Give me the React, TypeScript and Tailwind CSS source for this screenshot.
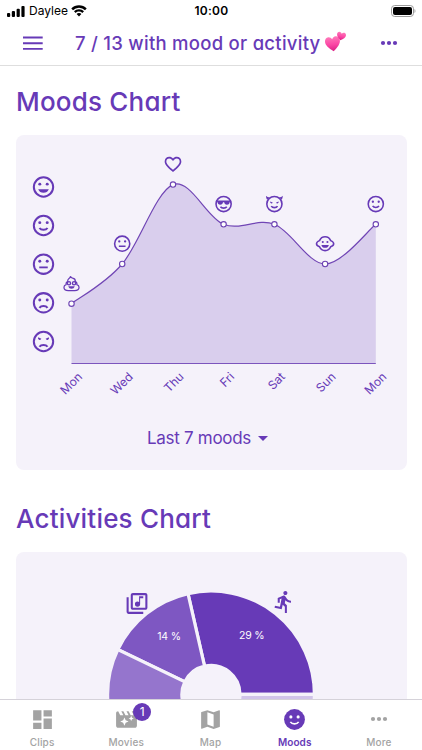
import type { ReactNode } from 'react';
import { MdDirectionsRun, MdFavoriteBorder, MdMap, MdOutlineLibraryMusic } from 'react-icons/md';

const heading = 'font-[Inter,sans-serif] font-medium [font-feature-settings:"cv11"]';

type Face = 'grin' | 'smile' | 'neutral' | 'sad' | 'angry' | 'cool' | 'devil' | 'monkey' | 'poop' | 'heart';

const axis: { face: Face; y: number }[] = [
    { face: 'grin', y: 187 },
    { face: 'smile', y: 225.5 },
    { face: 'neutral', y: 264.2 },
    { face: 'sad', y: 302.8 },
    { face: 'angry', y: 341.5 },
];

const moods: { day: string; x: number; y: number; face: Face }[] = [
    { day: 'Mon', x: 71.5, y: 303.7, face: 'poop' },
    { day: 'Wed', x: 122.2, y: 264, face: 'neutral' },
    { day: 'Thu', x: 173, y: 184.6, face: 'heart' },
    { day: 'Fri', x: 223.6, y: 224.3, face: 'cool' },
    { day: 'Sat', x: 274.4, y: 224.3, face: 'devil' },
    { day: 'Sun', x: 325.1, y: 264, face: 'monkey' },
    { day: 'Mon', x: 375.8, y: 224.3, face: 'smile' },
];

// Catmull-Rom spline through all the points
function curve() {
    let d = `M${moods[0].x},${moods[0].y}`;
    for (let i = 0; i < moods.length - 1; i++) {
        const a = moods[Math.max(i - 1, 0)];
        const b = moods[i];
        const c = moods[i + 1];
        const e = moods[Math.min(i + 2, moods.length - 1)];
        d += `C${b.x + (c.x - a.x) / 6},${b.y + (c.y - a.y) / 6} ${c.x - (e.x - b.x) / 6},${c.y - (e.y - b.y) / 6} ${c.x},${c.y}`;
    }
    return d;
}

function Eyes({ r = 1.4 }: { r?: number }) {
    return (
        <g fill="currentColor" stroke="none">
            <circle cx="8.5" cy="9.3" r={r} />
            <circle cx="15.5" cy="9.3" r={r} />
        </g>
    );
}

function FaceIcon({ face, cx, cy, size }: { face: Face; cx: number; cy: number; size: number }) {
    const x = cx - size / 2;
    const y = cy - size / 2;
    if (face === 'heart') return <MdFavoriteBorder x={x} y={y} size={size} />;
    const round = face !== 'poop' && face !== 'monkey';
    return (
        <svg x={x} y={y} width={size} height={size} viewBox="0 0 24 24" fill="none" stroke="currentColor" strokeWidth="1.9" overflow="visible">
            {round && <circle cx="12" cy="12" r="9.1" />}
            {['grin', 'smile', 'neutral', 'sad'].includes(face) && <Eyes />}
            {face === 'grin' && <path d="M7 14h10c-.8 2.2-2.7 3.4-5 3.4S7.8 16.2 7 14z" fill="currentColor" stroke="none" />}
            {face === 'smile' && <path d="M8.2 14.3c.8 1.2 2.2 1.8 3.8 1.8s3-.6 3.8-1.8" />}
            {face === 'neutral' && <path d="M8 15h8" strokeWidth="1.7" />}
            {face === 'sad' && <path d="M8.2 16.8c.8-1.2 2.2-1.8 3.8-1.8s3 .6 3.8 1.8" />}
            {face === 'angry' && (
                <>
                    <path d="M8.2 17c.8-1.2 2.2-1.8 3.8-1.8s3 .6 3.8 1.8" />
                    <path d="M7 8 10 9.5A1.5 1.5 0 1 1 7 8zM17 8 14 9.500A1.500 1.500 0 1 0 17 8z" fill="currentColor" stroke="none" />
                </>
            )}
            {face === 'cool' && (
                <>
                    <path d="M3.3 7.800h17.4v1.500h-1.300c-.2 2.400-1.200 3.500-3.400 3.500-2 0-3-1-3.300-2.900h-1.400C11 11.800 10 12.800 8 12.800s-3.200-1.100-3.400-3.500H3.300z" fill="currentColor" stroke="none" />
                    <path d="M8.200 15.200c.8 1.100 2.200 1.700 3.800 1.700s3-.6 3.800-1.700" />
                </>
            )}
            {face === 'devil' && (
                <>
                    <path d="M1.900 2c.1 1.900.5 3.400 1.500 4.900L6.500 4C4.600 3.800 3.200 3.300 1.900 2zM22.100 2c-.1 1.900-.5 3.400-1.500 4.900L17.500 4c1.900-.2 3.300-.7 4.600-2z" fill="currentColor" stroke="none" />
                    <path d="M7 9 10 10.200a1.500 1.500 0 1 1-3-1.200zM17 9 14 10.200a1.500 1.500 0 1 0 3-1.200z" fill="currentColor" stroke="none" />
                    <path d="M8.200 14.500c.8 1.200 2.200 1.800 3.800 1.800s3-.6 3.800-1.800" />
                </>
            )}
            {face === 'monkey' && (
                <>
                    <path d="M5.300 8.300C6.600 5.200 9 3.700 12 3.700s5.400 1.500 6.700 4.600c2.200.9 3.600 2.400 3.600 3.700s-1.400 2.800-3.600 3.700c-1.300 2.900-3.700 4.600-6.700 4.600s-5.400-1.700-6.700-4.600C3.100 14.800 1.700 13.300 1.700 12s1.400-2.800 3.600-3.700z" />
                    <circle cx="9.2" cy="10" r="1.250" fill="currentColor" stroke="none" />
                    <circle cx="14.800" cy="10" r="1.250" fill="currentColor" stroke="none" />
                    <path d="M7.500 13.500h9c-.5 2.300-2.200 3.500-4.500 3.500s-4-1.200-4.500-3.500z" fill="currentColor" stroke="none" />
                </>
            )}
            {face === 'poop' && (
                <g transform="translate(12 12) scale(.87) translate(-12 -11.500)">
                    <path d="M10.500 1.600c.3 1.900-.9 2.400-2 3.200-1.600 1.200-2 2.600-1.700 4.200-1.700.5-2.500 1.900-2.200 4.200-2 .6-3 1.900-3 3.700 0 2.800 2.700 4.500 6 4.500h8.800c3.300 0 6-1.700 6-4.500 0-1.800-1-3.100-3-3.700.3-2.300-.5-3.700-2.200-4.200.3-2.800-1.200-4.500-3.600-4.900-1.300-.3-2.600-1-3.100-2.500z" strokeWidth="1.700" />
                    <circle cx="8.500" cy="11.300" r="2.200" />
                    <circle cx="15.500" cy="11.300" r="2.200" />
                    <path d="M7.500 15.500h9c-.7 2.400-2.400 3.400-4.500 3.400s-3.800-1-4.500-3.400z" fill="currentColor" stroke="none" />
                </g>
            )}
        </svg>
    );
}

function StatusBar() {
    return (
        <div className="grid h-5 grid-cols-3 items-center pl-[7px] pr-[6px] pt-0.5 font-[Inter,sans-serif] text-black">
            <div className="flex items-center">
                <svg width="18" height="11" viewBox="0 0 18 11">
                    <rect x="0" y="7" width="3.200" height="4" rx="1" />
                    <rect x="4.800" y="5" width="3.200" height="6" rx="1" />
                    <rect x="9.600" y="2.800" width="3.200" height="8.200" rx="1" />
                    <rect x="14.400" y="0" width="3.200" height="11" rx="1" />
                </svg>
                <span className="ml-[4px] w-[38px] text-[12px] leading-4">Daylee</span>
                <svg className="ml-1" width="16" height="12" viewBox="0 0 16 12">
                    <path d="M8 .3c3 0 5.700 1.200 7.700 3.100l-1.700 1.800A8.600 8.600 0 0 0 8 2.700a8.600 8.600 0 0 0-6 2.500L.3 3.400C2.300 1.500 5 .3 8 .3zM8 4.200c2 0 3.700.7 5 2l-1.700 1.700A4.700 4.700 0 0 0 8 6.500c-1.300 0-2.400.5-3.300 1.400L3 6.200c1.300-1.300 3-2 5-2zM8 7.900c1 0 1.800.4 2.400 1L8 11.400 5.600 8.900c.6-.6 1.400-1 2.400-1z" />
                </svg>
            </div>
            <span className="text-center text-[12px] font-semibold leading-4 tracking-[0.3px]">10:00</span>
            <svg className="justify-self-end" width="25" height="12" viewBox="0 0 25 12">
                <rect x=".5" y=".5" width="22" height="11" rx="3.200" fill="none" stroke="#9b9b9b" />
                <rect x="2" y="2" width="19" height="8" rx="2" />
                <path d="M23.500 4v4c1.300-.5 1.300-3.500 0-4z" fill="#9b9b9b" />
            </svg>
        </div>
    );
}

function TwoHearts() {
    const heart = 'M12 21.500C5 16.500 1 12.500 1 8c0-3.400 2.500-5.800 5.600-5.800 2.300 0 4.300 1.200 5.400 3.300 1.100-2.100 3.100-3.300 5.400-3.300C20.500 2.200 23 4.600 23 8c0 4.500-4 8.500-11 13.500z';
    return (
        <svg width="22" height="22" viewBox="0 0 22 22" overflow="visible">
            <defs>
                <linearGradient id="pink" x1="0" y1="0" x2="0" y2="1">
                    <stop offset="0" stopColor="#ff78b9" />
                    <stop offset="0.55" stopColor="#fa45a4" />
                    <stop offset="1" stopColor="#d81f83" />
                </linearGradient>
            </defs>
            <path d={heart} fill="url(#pink)" transform="translate(-.6 4.200) rotate(-7 7 7) scale(.68 .76)" />
            <path d={heart} fill="url(#pink)" transform="translate(11.500 .2) rotate(12 4 4) scale(.41 .42)" />
        </svg>
    );
}

function Dots({ className }: { className: string }) {
    return (
        <svg className={className} width="18" height="6" viewBox="0 0 18 6" fill="currentColor">
            <circle cx="3" cy="3" r="2.100" />
            <circle cx="9" cy="3" r="2.100" />
            <circle cx="15" cy="3" r="2.100" />
        </svg>
    );
}

function Header() {
    return (
        <header className="flex h-[46px] items-center border-b border-[#dedede] pl-[23px]">
            <svg width="20" height="14" viewBox="0 0 20 14" stroke="currentColor" strokeWidth="1.900">
                <path d="M0 1.500h19.700M0 7.300h19.700M0 12.900h19.700" />
            </svg>
            <h1 className={`${heading} ml-[32px] w-[246px] whitespace-nowrap text-[18.500px] leading-6 tracking-[0.270px]`}>
                7 / 13 with mood or activity
            </h1>
            <div className="ml-1 -mt-px">
                <TwoHearts />
            </div>
            <Dots className="ml-[33px]" />
        </header>
    );
}

function MoodsChart() {
    const line = curve();
    return (
        <svg className="block" width="391" height="278" viewBox="16 135 391 278">
            <path d={`${line}V363.500H71.500Z`} fill="#d9ceed" />
            <path d={line} fill="none" stroke="#7146b5" strokeWidth="1.200" />
            <path d="M71.500 363.500H375.800" stroke="#7c55bd" strokeWidth="1.200" />
            {axis.map((a) => (
                <FaceIcon key={a.face} face={a.face} cx={43.5} cy={a.y} size={25.5} />
            ))}
            {moods.map((m, i) => (
                <g key={i}>
                    <circle cx={m.x} cy={m.y} r="2.700" fill="#fff" stroke="#6d43b3" strokeWidth="1.100" />
                    <FaceIcon face={m.face} cx={m.x} cy={m.y - 20.3} size={20} />
                    <text
                        transform={`translate(${m.x + 11.5} 377.500) rotate(-45)`}
                        textAnchor="end"
                        fill="currentColor"
                        className="font-[Inter,sans-serif] text-[12px]"
                    >
                        {m.day}
                    </text>
                </g>
            ))}
        </svg>
    );
}

const slices = [
    { from: 0, to: 2, color: '#673ab7' },
    { from: 2, to: 3, color: '#7e57c2' },
    { from: 3, to: 4, color: '#9575cd' },
    { from: 4, to: 7, color: '#d1c4e9' },
];

function ActivitiesChart() {
    const cx = 211;
    const cy = 694.4;
    const at = (n: number, r: number) => {
        const t = (n / 7) * Math.PI * 2;
        return `${cx + r * Math.cos(t)},${cy - r * Math.sin(t)}`;
    };
    return (
        <svg className="block" width="391" height="260" viewBox="16 552 391 260">
            {slices.map((s) => (
                <path
                    key={s.from}
                    d={`M${at(s.from, 103.4)}A103.4,103.4 0 0 0 ${at(s.to, 103.4)}L${at(s.to, 29)}A29,29 0 0 1 ${at(s.from, 29)}Z`}
                    fill={s.color}
                    stroke="#f5f2fa"
                    strokeWidth="3.200"
                />
            ))}
            <g fill="#fff" textAnchor="middle" className="font-[Inter,sans-serif] text-[10.500px] tracking-[-0.200px]">
                <text x="169" y="639.500">14 %</text>
                <text x="251.700" y="638.500">29 %</text>
            </g>
            <MdOutlineLibraryMusic x={124.5} y={591} size={25} />
            <MdDirectionsRun x={271.6} y={589.5} size={24.5} />
        </svg>
    );
}

function Tab({ label, active, children }: { label: string; active?: boolean; children: ReactNode }) {
    return (
        <button className={`flex flex-1 flex-col items-center pt-[7px] ${active ? 'text-[#673ab7]' : 'text-[#a3a3a3]'}`}>
            <span className="relative flex h-6 w-6 items-center justify-center">{children}</span>
            <span className={`mt-1 font-[Inter,sans-serif] text-[10px] leading-[14px] ${active ? 'font-semibold tracking-[0.1px]' : 'font-medium tracking-[0.15px]'}`}>
                {label}
            </span>
        </button>
    );
}

function TabBar() {
    return (
        <nav className="z-10 flex h-[51px] shrink-0 border-t border-[#d5d2d9] bg-white pr-px">
            <Tab label="Clips">
                <svg className="shrink-0" width="25" height="25" viewBox="0 0 24 24" fill="currentColor">
                    <path d="M13 3v6h8V3M13 21h8V11h-8M3 21h8v-6H3M3 13h8V3H3z" />
                </svg>
            </Tab>
            <Tab label="Movies">
                <svg className="shrink-0" width="25" height="25" viewBox="0 0 24 24" fill="currentColor">
                    <path d="M2 6c0-1.100.8-2 2-2l2 4h3L7 4h2l2 4h3l-2-4h2l2 4h3l-2-4h5v14c0 1.100-.9 2-2 2H4c-1.100 0-2-.9-2-2z" />
                    <path fill="#fff" d="m10 10 1.200 2.800L14 14l-2.800 1.200L10 18l-1.200-2.800L6 14l2.800-1.200zM16.500 8.500l.8 1.700 1.700.8-1.700.8-.8 1.700-.8-1.700L14 11l1.700-.8z" />
                </svg>
                <span className="absolute left-[19px] top-[-4px] flex h-[18px] w-[18px] items-center justify-center rounded-full bg-[#673ab7] font-[Inter,sans-serif] text-[12px] leading-none text-white">
                    1
                </span>
            </Tab>
            <Tab label="Map">
                <MdMap size={25} className="shrink-0" />
            </Tab>
            <Tab label="Moods" active>
                <svg className="shrink-0" width="25" height="25" viewBox="0 0 24 24">
                    <circle cx="12" cy="12" r="10" fill="currentColor" />
                    <circle cx="8.500" cy="9.500" r="1.500" fill="#fff" />
                    <circle cx="15.500" cy="9.500" r="1.500" fill="#fff" />
                    <path d="M8 14.300c.9 1.300 2.300 1.900 4 1.900s3.100-.6 4-1.900" fill="none" stroke="#fff" strokeWidth="1.600" />
                </svg>
            </Tab>
            <Tab label="More">
                <Dots className="shrink-0" />
            </Tab>
        </nav>
    );
}

export default function App() {
    return (
        <div className="flex h-[750px] w-[422px] flex-col overflow-hidden bg-white text-[#673ab7]">
            <StatusBar />
            <Header />
            <main className="min-h-0 flex-1 overflow-hidden pl-4 pr-[15px]">
                <h2 className={`${heading} pt-[18px] text-[26px] leading-9 tracking-[0.2px]`}>Moods Chart</h2>
                <section className="mt-[15px] h-[335px] overflow-hidden rounded-lg bg-[#f5f2fa]">
                    <MoodsChart />
                    <button className="mx-auto flex items-center gap-[7px] pr-2 pt-[13px] font-[Inter,sans-serif] text-[17px] leading-6 tracking-[-0.3px]">
                        <span>Last 7 moods</span>
                        <svg width="10" height="5" viewBox="0 0 10 5" fill="currentColor">
                            <path d="M0 0h10L5 5z" />
                        </svg>
                    </button>
                </section>
                <h2 className={`${heading} mt-[31px] text-[26px] leading-9 tracking-[0.2px]`}>Activities Chart</h2>
                <section className="mt-[15px] h-[260px] overflow-hidden rounded-lg bg-[#f5f2fa]">
                    <ActivitiesChart />
                </section>
            </main>
            <TabBar />
        </div>
    );
}
